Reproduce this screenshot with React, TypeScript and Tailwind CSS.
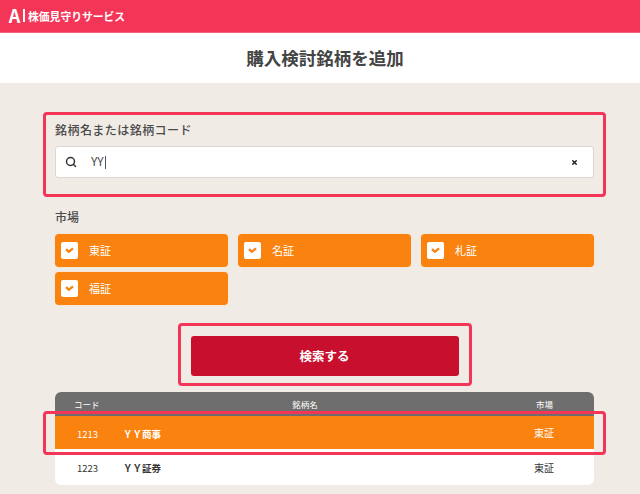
import React from 'react';
import { Search, X } from 'lucide-react';

const FONT = "font-['Noto_Sans_CJK_JP','Noto_Sans',sans-serif]";

function MarketChip({ label }: { label: string }) {
  return (
    <div className="flex h-[33px] items-center rounded-[3px] bg-[#fa820f] pl-[6px] text-[11px] text-white outline-1 outline-[#f6e7d8]">
      <span className="flex h-[17px] w-[17px] items-center justify-center rounded-[2px] bg-white">
        <svg viewBox="0 0 10 8" className="h-[7px] w-[9px]" fill="none" stroke="#fa820f" strokeWidth="2.6">
          <path d="M1 2.5 L4.2 5.5 L9 1.5" />
        </svg>
      </span>
      <span className="ml-[11px]">{label}</span>
    </div>
  );
}

const results = [
  { code: '1213', name: 'ＹＹ商事', market: '東証', selected: true },
  { code: '1223', name: 'ＹＹ証券', market: '東証', selected: false },
];

export default function App() {
  return (
    <div className={`${FONT} h-[494px] w-[640px] overflow-hidden bg-[#f0ebe5] text-[#4a4a4a]`}>
      <header className="flex h-[33px] items-center border-b border-[#f7637f] bg-[#f33658] pl-[7px] text-white">
        <span className="mb-[3px] w-[15px] text-center text-[18px] font-bold leading-none">A</span>
        <span className="mb-[1px] ml-[1px] mr-[3px] h-[13px] w-[2px] bg-white" />
        <span className="text-[10.8px] font-bold leading-none">株価見守りサービス</span>
      </header>

      <div className="flex h-[50px] items-center justify-center bg-white pl-[10px] text-[17.5px] font-bold text-[#444]">
        購入検討銘柄を追加
      </div>

      <main className="pl-[55px] pr-[46px]">
        <section className="-mx-[12px] mt-[29px] h-[85px] rounded-[4px] border-[3px] border-[#f33658] px-[9px] pt-[6px]">
          <label className="block text-[12px] font-medium leading-[17px] tracking-[0.45px]">銘柄名または銘柄コード</label>
          <div className="mt-[8px] flex h-[32px] items-center rounded-[3px] border border-[#dcd7d2] bg-white pl-[9px] pr-[15px]">
            <Search className="h-[12px] w-[12px] text-[#333]" strokeWidth={3} />
            <span className="ml-[14px] flex-1 text-[12px] leading-none">YY<span className="ml-px inline-block h-[13px] w-px bg-[#555] align-middle" /></span>
            <X className="h-[7px] w-[7px] text-[#222]" strokeWidth={5} />
          </div>
        </section>

        <p className="mt-[11px] text-[12px] font-medium leading-[17px]">市場</p>
        <div className="mt-[9px] grid grid-cols-[173px_173px_173px] gap-x-[10px] gap-y-[5px]">
          <MarketChip label="東証" />
          <MarketChip label="名証" />
          <MarketChip label="札証" />
          <MarketChip label="福証" />
        </div>

        <div className="mt-[18px] flex justify-center">
          <div className="rounded-[4px] border-[3px] border-[#f33658] px-[10px] pb-[7px] pt-[10px]">
            <button className="flex h-[40px] w-[268px] items-center justify-center rounded-[3px] bg-[#c8102e] text-[12.5px] font-bold text-white">
              検索する
            </button>
          </div>
        </div>

        <div className="relative mt-[6px] rounded-[6px] bg-white">
          <div className="flex h-[24px] items-center rounded-t-[6px] bg-[#6e6e6e] text-[8.5px] text-white">
            <span className="w-[55px] pl-[19px]">コード</span>
            <span className="flex-1 pr-[34px] text-center">銘柄名</span>
            <span className="w-[60px] pl-[2px]">市場</span>
          </div>
          {results.map((row) => (
            <div
              key={row.code}
              className={
                row.selected
                  ? 'flex h-[33px] items-center bg-[#fa820f] text-[9.5px] text-white'
                  : 'mt-px flex h-[35px] items-center rounded-b-[6px] text-[9.5px] text-[#333]'
              }
            >
              <span className={row.selected ? 'w-[55px] pl-[22px] pt-[3px]' : 'w-[55px] pl-[22px] pt-[1px]'}>{row.code}</span>
              <span className={row.selected ? 'flex-1 pl-[13px] pt-[3px] font-bold' : 'flex-1 pl-[13px] pt-[1px] font-bold'}>{row.name}</span>
              <span className="w-[60px] text-[10px]">{row.market}</span>
            </div>
          ))}
          <div className="pointer-events-none absolute -inset-x-[12px] top-[19px] h-[44px] rounded-[4px] border-[3px] border-[#f33658]" />
        </div>
      </main>
    </div>
  );
}
